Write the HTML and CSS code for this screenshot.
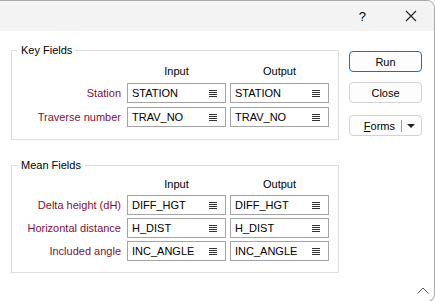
FILE: index.html
```html
<!DOCTYPE html>
<html lang="en">
<head>
    <meta charset="UTF-8">
    <title>Traverse Mean Fields</title>
    <link rel="stylesheet" href="styles.css">
</head>
<body>
    <div class="window">
        <div class="titlebar">
            <span class="help">?</span>
            <svg class="close-x" width="12" height="12" viewBox="0 0 12 12">
                <path d="M1 1 L11 11 M11 1 L1 11" stroke="#222" stroke-width="1.1" fill="none"/>
            </svg>
        </div>
        <div class="content">
            <div class="groups">
                <fieldset class="group key">
                    <legend>Key Fields</legend>
                    <div class="grid">
                        <span></span>
                        <span class="head">Input</span>
                        <span class="head">Output</span>

                        <label>Station</label>
                        <div class="field"><span>STATION</span><i class="menu"></i></div>
                        <div class="field"><span>STATION</span><i class="menu"></i></div>

                        <label>Traverse number</label>
                        <div class="field"><span>TRAV_NO</span><i class="menu"></i></div>
                        <div class="field"><span>TRAV_NO</span><i class="menu"></i></div>
                    </div>
                </fieldset>
                <fieldset class="group mean">
                    <legend>Mean Fields</legend>
                    <div class="grid">
                        <span></span>
                        <span class="head">Input</span>
                        <span class="head">Output</span>

                        <label>Delta height (dH)</label>
                        <div class="field"><span>DIFF_HGT</span><i class="menu"></i></div>
                        <div class="field"><span>DIFF_HGT</span><i class="menu"></i></div>

                        <label>Horizontal distance</label>
                        <div class="field"><span>H_DIST</span><i class="menu"></i></div>
                        <div class="field"><span>H_DIST</span><i class="menu"></i></div>

                        <label>Included angle</label>
                        <div class="field"><span>INC_ANGLE</span><i class="menu"></i></div>
                        <div class="field"><span>INC_ANGLE</span><i class="menu"></i></div>
                    </div>
                </fieldset>
            </div>
            <div class="buttons">
                <button class="btn primary">Run</button>
                <button class="btn">Close</button>
                <button class="btn split"><span class="label"><u>F</u>orms</span><span class="sep"></span><span class="arrow"></span></button>
            </div>
        </div>
        <svg class="grip" width="12" height="7" viewBox="0 0 12 7">
            <path d="M0.5 6.5 L6 1 L11.5 6.5" stroke="#555" stroke-width="1" fill="none"/>
        </svg>
    </div>
</body>
</html>
```

FILE: styles.css
```css
body {
    margin: 0;
    background: #fff;
    font-family: "Liberation Sans", Arial, sans-serif;
    font-size: 11px;
    color: #000;
}
.window {
    position: relative;
    width: 434px;
    height: 300px;
    border-top: 1px solid #a8a8a8;
    border-right: 1px solid #a8a8a8;
    border-bottom: 1px solid #a8a8a8;
    border-radius: 0 8px 8px 0;
    overflow: hidden;
    background: #fff;
}
.titlebar {
    height: 30px;
    background: #f3f3f3;
    display: flex;
    align-items: center;
    justify-content: flex-end;
}
.help {
    font-size: 13px;
    margin-right: 39px;
}
.close-x {
    margin-right: 17px;
}
.content {
    display: flex;
    padding: 13px 0 0 11px;
}
.groups {
    display: flex;
    flex-direction: column;
    gap: 19px;
    width: 328px;
}
.group {
    margin: 0;
    padding: 0 9px 0 0;
    border: 1px solid #dcdcdc;
}
.group legend {
    margin-left: 6px;
    padding: 0 3px;
    line-height: 13px;
}
.key {
    height: 94px;
}
.mean {
    height: 112px;
}
.grid {
    display: grid;
    grid-template-columns: 1fr 99px 99px;
    grid-auto-rows: 20px;
    column-gap: 4px;
    row-gap: 3px;
    margin-top: 0;
}
.key .grid {
    row-gap: 4px;
    margin-top: 2px;
}
.grid label {
    color: #7d1038;
    text-align: right;
    line-height: 20px;
    padding-right: 2px;
}
.head {
    text-align: center;
    line-height: 24px;
}
.field {
    display: flex;
    align-items: center;
    justify-content: space-between;
    border: 1px solid #a4a4a4;
    padding: 0 8px 0 4px;
}
.menu {
    width: 8px;
    height: 7px;
    background: repeating-linear-gradient(#333 0 1px, transparent 1px 2px);
}
.buttons {
    display: flex;
    flex-direction: column;
    gap: 10px;
    margin: 7px 0 0 10px;
}
.btn {
    width: 73px;
    height: 21px;
    border: 1px solid #d3d3d3;
    border-radius: 4px;
    background: #fdfdfd;
    font: inherit;
    color: #000;
    padding: 0;
}
.primary {
    border-color: #1a6fc4;
}
.split {
    display: flex;
    align-items: center;
    justify-content: flex-end;
    margin-top: 2px;
    padding-right: 6px;
}
.split u {
    text-decoration: underline;
}
.sep {
    width: 1px;
    height: 12px;
    background: #999;
    margin: 0 5px 0 6px;
}
.arrow {
    width: 0;
    height: 0;
    border-left: 4px solid transparent;
    border-right: 4px solid transparent;
    border-top: 4px solid #222;
}
.grip {
    position: absolute;
    right: 5px;
    bottom: 7px;
}
```
